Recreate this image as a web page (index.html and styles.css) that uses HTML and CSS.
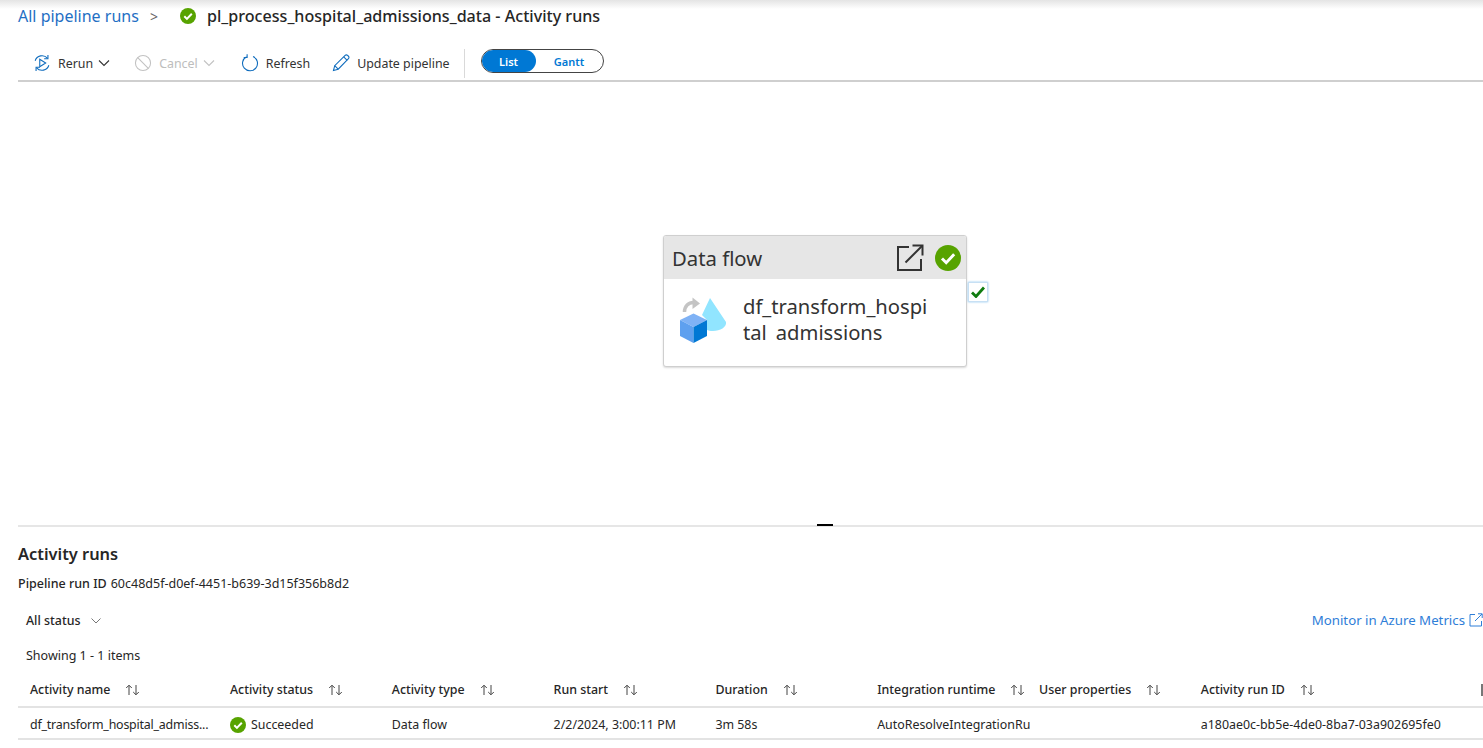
FILE: index.html
```html
<!DOCTYPE html>
<html>
    <head>
        <title>Activity runs</title>
        <link rel="stylesheet" href="styles.css">
    </head>
    <body>
        <div class="TopShade"></div>
        <div class="Breadcrumb">
            <a class="CrumbLink">All pipeline runs</a>
            <span class="CrumbSep">&gt;</span>
            <svg class="CrumbIcon" viewBox="0 0 16 16"><circle cx="8" cy="8" r="8" fill="#57a300"/><path d="M4.3 8.3l2.6 2.6 4.900-5.200" fill="none" stroke="#fff" stroke-width="2"/></svg>
            <span class="CrumbTitle">pl_process_hospital_admissions_data - Activity runs</span>
        </div>

        <div class="Toolbar">
            <div class="ToolBtn BtnRerun">
                <svg class="ToolIcon" viewBox="0 0 20 20" fill="none" stroke="#0f6cbd" stroke-width="1.2"><path d="M2.400 7.500A8 8 0 0 1 16 4.600"/><path d="M17.600 12.500A8 8 0 0 1 4 15.400"/><path d="M16.600 1v4.200h-4.200"/><path d="M3.400 19v-4.200h4.200"/><path d="M7.500 5.800v8.400l6.600-4.200z"/></svg>
                <span>Rerun</span>
                <svg class="Chevron" viewBox="0 0 12 8" fill="none" stroke="#333" stroke-width="1.1"><path d="M1 1.500l5 5 5-5"/></svg>
            </div>
            <div class="ToolBtn BtnCancel Disabled">
                <svg class="ToolIcon" viewBox="0 0 20 20" fill="none" stroke="#c2c2c2" stroke-width="1.2"><circle cx="10" cy="10" r="8.400"/><path d="M4.100 4.100l11.800 11.800"/></svg>
                <span>Cancel</span>
                <svg class="Chevron" viewBox="0 0 12 8" fill="none" stroke="#c2c2c2" stroke-width="1.1"><path d="M1 1.500l5 5 5-5"/></svg>
            </div>
            <div class="ToolBtn BtnRefresh">
                <svg class="ToolIcon" viewBox="0 0 20 20" fill="none" stroke="#0f6cbd" stroke-width="1.2"><path d="M13.400 2.800A8.300 8.300 0 1 1 6.200 3"/><path d="M6.800 0.400v3.400H3"/></svg>
                <span>Refresh</span>
            </div>
            <div class="ToolBtn BtnUpdate">
                <svg class="ToolIcon" viewBox="0 0 20 20" fill="none" stroke="#0f6cbd" stroke-width="1.2"><path d="M1.600 18.400l1.400-5.400L14.600 1.500a1.900 1.900 0 0 1 2.700 0l1 1a1.900 1.900 0 0 1 0 2.700L6.900 16.900z"/><path d="M3 13l3.900 3.900"/><path d="M13 3.100l3.900 3.900"/></svg>
                <span>Update pipeline</span>
            </div>
            <div class="ToolDivider"></div>
            <div class="ViewToggle">
                <span class="ToggleOn">List</span>
                <span class="ToggleOff">Gantt</span>
            </div>
        </div>

        <div class="Canvas">
            <div class="Node">
                <div class="NodeHeader">
                    <span>Data flow</span>
                    <svg class="NodeOpen" viewBox="0 0 28 28" fill="none" stroke="#333" stroke-width="2"><path d="M13 3H2v23h23V15"/><path d="M9.500 18.500L26 2"/><path d="M16.500 1.500H26.500V11.500"/></svg>
                    <svg class="NodeStatus" viewBox="0 0 16 16"><circle cx="8" cy="8" r="8" fill="#57a300"/><path d="M4.300 8.300l2.600 2.600 4.900-5.200" fill="none" stroke="#fff" stroke-width="1.800"/></svg>
                </div>
                <div class="NodeBody">
                    <svg class="NodeIcon" viewBox="0 0 48 48">
                        <path d="M4.500 16c0-6 4-9.500 9-9.500" fill="none" stroke="#c4c4c4" stroke-width="3.500"/>
                        <path d="M12.500 1.500l7.500 6-7.500 5.500z" fill="#c4c4c4"/>
                        <path d="M30 2L46 26c1 5-6 9-13 9-3 0-5-.5-6-1V24l-5-5z" fill="#91e5ff"/>
                        <path d="M13.500 17.500L27 24l-13.500 7L0 24z" fill="#7fb2f5"/>
                        <path d="M0 24l13.500 7v16L0 40z" fill="#5ea0ef"/>
                        <path d="M27 24l-13.500 7v16L27 40z" fill="#0078d4"/>
                    </svg>
                    <div class="NodeName">df_transform_hospi<br>tal_admissions</div>
                </div>
                <div class="NodeCheck">
                    <svg viewBox="0 0 14 12"><path d="M1 6.500l4 4 8-9" fill="none" stroke="#107c10" stroke-width="2.800"/></svg>
                </div>
            </div>
        </div>

        <div class="Splitter"><div class="SplitHandle"></div></div>

        <div class="Details">
            <h2 class="DetailsTitle">Activity runs</h2>
            <div class="RunId"><b>Pipeline run ID</b><span>60c48d5f-d0ef-4451-b639-3d15f356b8d2</span></div>
            <div class="FilterRow">
                <div class="StatusFilter">
                    <span>All status</span>
                    <svg class="FilterChevron" viewBox="0 0 12 8" fill="none" stroke="#777" stroke-width="1"><path d="M1.500 1.500L6 6l4.500-4.500"/></svg>
                </div>
                <a class="MetricsLink">
                    <span>Monitor in Azure Metrics</span>
                    <svg class="MetricsIcon" viewBox="0 0 14 14" fill="none" stroke="#2f7ed8" stroke-width="1"><path d="M6 1.500H1v11.500h11.500V8"/><path d="M6 8l7-7"/><path d="M9 .8h4.200V5"/></svg>
                </a>
            </div>
            <div class="Showing">Showing 1 - 1 items</div>
            <div class="TableWrap">
                <div class="Row HeadRow">
                    <div class="Cell Col1">Activity name<svg class="Sort" viewBox="0 0 16 12"><path d="M4 11V1.500M1.200 4L4 1.200 6.800 4M11 1v9.500M8.200 8L11 10.800 13.800 8" fill="none" stroke="#444" stroke-width="1"/></svg></div>
                    <div class="Cell">Activity status<svg class="Sort" viewBox="0 0 16 12"><path d="M4 11V1.500M1.200 4L4 1.200 6.800 4M11 1v9.500M8.200 8L11 10.800 13.800 8" fill="none" stroke="#444" stroke-width="1"/></svg></div>
                    <div class="Cell">Activity type<svg class="Sort" viewBox="0 0 16 12"><path d="M4 11V1.500M1.200 4L4 1.200 6.800 4M11 1v9.500M8.200 8L11 10.800 13.800 8" fill="none" stroke="#444" stroke-width="1"/></svg></div>
                    <div class="Cell">Run start<svg class="Sort" viewBox="0 0 16 12"><path d="M4 11V1.500M1.200 4L4 1.200 6.800 4M11 1v9.500M8.200 8L11 10.800 13.800 8" fill="none" stroke="#444" stroke-width="1"/></svg></div>
                    <div class="Cell">Duration<svg class="Sort" viewBox="0 0 16 12"><path d="M4 11V1.500M1.200 4L4 1.200 6.800 4M11 1v9.500M8.200 8L11 10.800 13.800 8" fill="none" stroke="#444" stroke-width="1"/></svg></div>
                    <div class="Cell">Integration runtime<svg class="Sort" viewBox="0 0 16 12"><path d="M4 11V1.500M1.200 4L4 1.200 6.800 4M11 1v9.500M8.200 8L11 10.800 13.800 8" fill="none" stroke="#444" stroke-width="1"/></svg></div>
                    <div class="Cell">User properties<svg class="Sort" viewBox="0 0 16 12"><path d="M4 11V1.500M1.200 4L4 1.200 6.800 4M11 1v9.500M8.200 8L11 10.800 13.800 8" fill="none" stroke="#444" stroke-width="1"/></svg></div>
                    <div class="Cell ColId">Activity run ID<svg class="Sort" viewBox="0 0 16 12"><path d="M4 11V1.500M1.200 4L4 1.200 6.800 4M11 1v9.500M8.200 8L11 10.800 13.800 8" fill="none" stroke="#444" stroke-width="1"/></svg></div>
                    <div class="Cell ColEnd"></div>
                </div>
                <div class="Row DataRow">
                    <div class="Cell Col1 RowName">df_transform_hospital_admiss...</div>
                    <div class="Cell"><svg class="RowStatus" viewBox="0 0 16 16"><circle cx="8" cy="8" r="8" fill="#57a300"/><path d="M4.300 8.300l2.600 2.600 4.900-5.200" fill="none" stroke="#fff" stroke-width="2"/></svg>Succeeded</div>
                    <div class="Cell">Data flow</div>
                    <div class="Cell">2/2/2024, 3:00:11 PM</div>
                    <div class="Cell">3m 58s</div>
                    <div class="Cell">AutoResolveIntegrationRu</div>
                    <div class="Cell"></div>
                    <div class="Cell ColId">a180ae0c-bb5e-4de0-8ba7-03a902695fe0</div>
                </div>
            </div>
        </div>
    </body>
</html>
```

FILE: styles.css
```css
html, body{
    margin: 0;
    height: 748px;
    overflow: hidden;
    background-color: white;
}

body{
    font-family: "Noto Sans", "Open Sans", sans-serif;
    font-size: 12.4px;
    color: #262626;
    position: relative;
}

.TopShade{
    position: absolute;
    left: 0;
    right: 0;
    top: 0;
    height: 9px;
    background-image: linear-gradient(#e4e4e4, white);
}

/* breadcrumb */
.Breadcrumb{
    position: relative;
    height: 32px;
    padding-left: 18px;
    display: flex;
    align-items: center;
}

.CrumbLink{
    font-size: 16px;
    color: #1f6fc4;
    width: 121px;
    white-space: nowrap;
}

.CrumbSep{
    font-size: 14px;
    color: #666;
    margin-left: 11px;
    width: 30px;
}

.CrumbIcon{
    width: 16px;
    height: 16px;
}

.CrumbTitle{
    font-size: 16.1px;
    font-weight: 500;
    color: #262626;
    margin-left: 11px;
    white-space: nowrap;
}

/* toolbar */
.Toolbar{
    height: 50px;
    box-sizing: border-box;
    padding-top: 14px;
    margin-left: 18px;
    border-bottom: 2px solid #cfcfcf;
    display: flex;
    align-items: center;
}

.ToolBtn{
    display: flex;
    align-items: center;
    white-space: nowrap;
    color: #333;
}

.Disabled{
    color: #bdbdbd;
}

.ToolIcon{
    width: 18px;
    height: 18px;
    margin-right: 7px;
}

.Chevron{
    width: 12px;
    height: 8px;
    margin-left: 5px;
}

.BtnRerun{
    margin-left: 15px;
}

.BtnCancel{
    margin-left: 24px;
}

.BtnRefresh{
    margin-left: 26px;
}

.BtnUpdate{
    margin-left: 22px;
}

.ToolDivider{
    width: 1px;
    height: 29px;
    background-color: #d9d9d9;
    margin-left: 14px;
}

.ViewToggle{
    width: 121px;
    height: 22px;
    margin-left: 16px;
    margin-bottom: 4px;
    border: 1px solid #444;
    border-radius: 12px;
    display: flex;
    font-size: 11px;
    font-weight: 600;
    overflow: hidden;
}

.ToggleOn{
    width: 54px;
    background-color: #0078d4;
    color: white;
    border-radius: 12px;
    display: flex;
    align-items: center;
    justify-content: center;
}

.ToggleOff{
    flex: 1;
    color: #0078d4;
    display: flex;
    align-items: center;
    justify-content: center;
}

/* canvas */
.Canvas{
    height: 443px;
    position: relative;
}

.Node{
    position: absolute;
    left: 663px;
    top: 153px;
    width: 302px;
    height: 130px;
    border: 1px solid #cfcfcf;
    border-radius: 3px;
    box-shadow: 0 1px 2px rgba(0,0,0,0.15);
    background-color: white;
}

.NodeHeader{
    height: 43px;
    background-color: #e6e6e6;
    display: flex;
    align-items: center;
    padding-left: 8px;
    font-size: 20.3px;
    color: #333;
    border-radius: 2px 2px 0 0;
}

.NodeHeader span{
    flex: 1;
}

.NodeOpen{
    width: 28px;
    height: 28px;
    margin-right: 11px;
}

.NodeStatus{
    width: 26px;
    height: 26px;
    margin-right: 5px;
}

.NodeBody{
    display: flex;
    padding: 14px 0 0 16px;
}

.NodeIcon{
    width: 48px;
    height: 48px;
    margin-top: 3px;
}

/* the box stops right under the second line, the underscore there gets cut like on the real canvas */
.NodeName{
    font-size: 20.2px;
    line-height: 26px;
    height: 47px;
    overflow: hidden;
    color: #333;
    margin-left: 15px;
}

.NodeCheck{
    position: absolute;
    left: 304px;
    top: 46px;
    width: 18px;
    height: 18px;
    border: 1px solid #c7e0f4;
    box-shadow: 0 0 2px #8ac4ee;
    background-color: white;
    display: flex;
    align-items: center;
    justify-content: center;
}

.NodeCheck svg{
    width: 14px;
    height: 12px;
}

/* splitter */
.Splitter{
    height: 2px;
    margin-left: 18px;
    background-color: #e6e6e6;
    position: relative;
}

.SplitHandle{
    position: absolute;
    left: 799px;
    top: -1px;
    width: 16px;
    height: 2px;
    background-color: black;
}

/* activity runs */
.Details{
    padding-left: 18px;
}

.DetailsTitle{
    margin: 0;
    padding-top: 14px;
    height: 26px;
    line-height: 26px;
    font-size: 16.4px;
    font-weight: 600;
    color: #262626;
}

.RunId{
    margin-top: 7px;
    height: 20px;
    line-height: 20px;
    display: flex;
    font-size: 12.5px;
}

.RunId b{
    font-weight: 500;
    margin-right: 4px;
}

.FilterRow{
    margin-top: 17px;
    height: 20px;
    line-height: 20px;
    display: flex;
    align-items: center;
    justify-content: space-between;
}

.StatusFilter{
    display: flex;
    align-items: center;
    margin-left: 8px;
    font-weight: 500;
}

.FilterChevron{
    width: 12px;
    height: 8px;
    margin-left: 10px;
}

.MetricsLink{
    display: flex;
    align-items: center;
    color: #2f7ed8;
    font-size: 13.25px;
    margin-bottom: 2px;
}

.MetricsIcon{
    width: 14px;
    height: 14px;
    margin-left: 4px;
}

.Showing{
    margin-top: 15px;
    margin-left: 8px;
    height: 20px;
    line-height: 20px;
    font-size: 12.5px;
}

.TableWrap{
    margin-top: 7px;
}

.Row{
    display: flex;
    width: 1500px;
    white-space: nowrap;
    border-bottom: 2px solid #e3e3e3;
}

.HeadRow{
    height: 33px;
    align-items: center;
    font-weight: 500;
}

.DataRow{
    height: 27px;
    padding-top: 3px;
    align-items: center;
}

.Cell{
    width: 161.8px;
    flex-shrink: 0;
    display: flex;
    align-items: center;
}

.Col1{
    width: 200px;
    margin-left: 12px;
}

.RowName{
    letter-spacing: -0.2px;
}

.ColId{
    width: 280px;
}

.ColEnd{
    width: 2px;
    height: 12px;
    background-color: #777;
}

.Sort{
    width: 16px;
    height: 12px;
    margin-left: 15px;
    flex-shrink: 0;
}

.RowStatus{
    width: 16px;
    height: 16px;
    margin-right: 5px;
}
```
